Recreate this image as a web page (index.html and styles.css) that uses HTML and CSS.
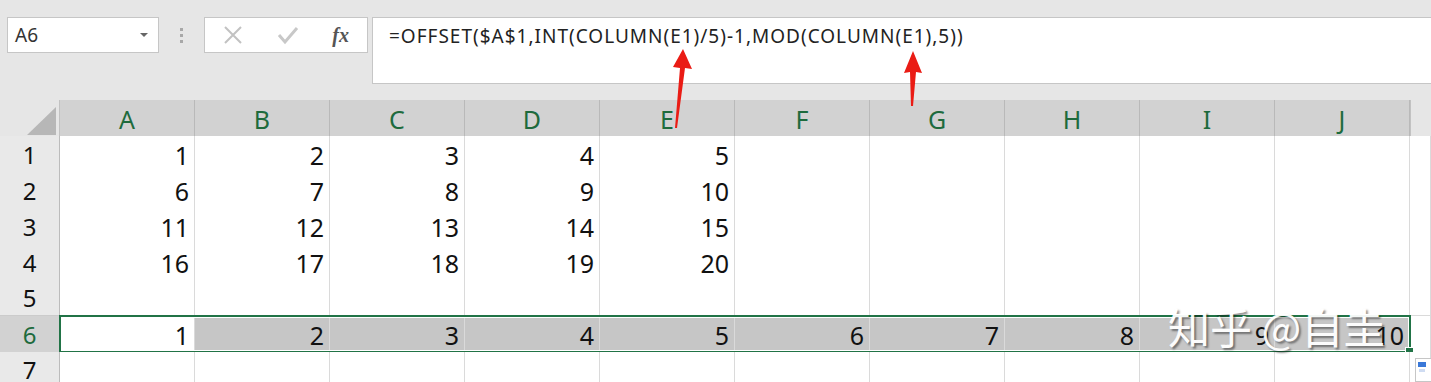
FILE: index.html
```html
<!DOCTYPE html>
<html lang="zh-CN">
<head>
  <meta charset="UTF-8">
  <title>OFFSET</title>
  <link rel="stylesheet" href="styles.css">
</head>
<body>
<div class="app">

  <!-- Namenfeld + Bearbeitungsleiste -->
  <div class="toolbar">
    <div class="namebox">
      <span>A6</span>
      <span class="caret"></span>
    </div>
    <div class="grip"><i></i><i></i><i></i></div>
    <div class="buttons">
      <svg width="20" height="20" viewBox="0 0 20 20"><path d="M2 2 L18 18 M18 2 L2 18" stroke="#c2c2c2" stroke-width="2" fill="none"/></svg>
      <svg width="22" height="20" viewBox="0 0 22 20"><path d="M2 10 L8 17 L20 3" stroke="#c8c8c8" stroke-width="3" fill="none"/></svg>
      <span class="fx">fx</span>
    </div>
    <div class="formula">=OFFSET($A$1,INT(COLUMN(E1)/5)-1,MOD(COLUMN(E1),5))</div>
  </div>

  <!-- Tabelle -->
  <div class="sheet">
    <div class="row head">
      <div class="corner"></div>
      <div class="col">A</div><div class="col">B</div><div class="col">C</div><div class="col">D</div><div class="col">E</div>
      <div class="col">F</div><div class="col">G</div><div class="col">H</div><div class="col">I</div><div class="col">J</div>
      <div class="rest"></div>
    </div>
    <div class="row">
      <div class="num">1</div>
      <div class="cell">1</div><div class="cell">2</div><div class="cell">3</div><div class="cell">4</div><div class="cell">5</div>
      <div class="cell"></div><div class="cell"></div><div class="cell"></div><div class="cell"></div><div class="cell"></div><div class="cell"></div>
    </div>
    <div class="row">
      <div class="num">2</div>
      <div class="cell">6</div><div class="cell">7</div><div class="cell">8</div><div class="cell">9</div><div class="cell">10</div>
      <div class="cell"></div><div class="cell"></div><div class="cell"></div><div class="cell"></div><div class="cell"></div><div class="cell"></div>
    </div>
    <div class="row">
      <div class="num">3</div>
      <div class="cell">11</div><div class="cell">12</div><div class="cell">13</div><div class="cell">14</div><div class="cell">15</div>
      <div class="cell"></div><div class="cell"></div><div class="cell"></div><div class="cell"></div><div class="cell"></div><div class="cell"></div>
    </div>
    <div class="row">
      <div class="num">4</div>
      <div class="cell">16</div><div class="cell">17</div><div class="cell">18</div><div class="cell">19</div><div class="cell">20</div>
      <div class="cell"></div><div class="cell"></div><div class="cell"></div><div class="cell"></div><div class="cell"></div><div class="cell"></div>
    </div>
    <div class="row">
      <div class="num">5</div>
      <div class="cell"></div><div class="cell"></div><div class="cell"></div><div class="cell"></div><div class="cell"></div>
      <div class="cell"></div><div class="cell"></div><div class="cell"></div><div class="cell"></div><div class="cell"></div><div class="cell"></div>
    </div>
    <div class="row selected">
      <div class="num">6</div>
      <div class="cell active">1</div><div class="cell">2</div><div class="cell">3</div><div class="cell">4</div><div class="cell">5</div>
      <div class="cell">6</div><div class="cell">7</div><div class="cell">8</div><div class="cell">9</div><div class="cell">10</div><div class="cell blank"></div>
      <div class="selection"><span class="handle"></span></div>
    </div>
    <div class="row">
      <div class="num">7</div>
      <div class="cell"></div><div class="cell"></div><div class="cell"></div><div class="cell"></div><div class="cell"></div>
      <div class="cell"></div><div class="cell"></div><div class="cell"></div><div class="cell"></div><div class="cell"></div><div class="cell"></div>
    </div>
  </div>

  <!-- Markierungen -->
  <svg class="arrows" width="1431" height="382" viewBox="0 0 1431 382">
    <polygon points="683,49 692,69 685,68 677,128 675,128 680,68 673,67" fill="#ea1c15"/>
    <polygon points="913,51 922,73 916,72 913,106 911,106 910,72 904,73" fill="#ea1c15"/>
  </svg>
  <div class="watermark">知乎 @自圭</div>
  <div class="quick"><span></span></div>

</div>
</body>
</html>
```

FILE: styles.css
```css
/* =====================
   Farben
   ===================== */
:root {
  --bg: #e6e6e6;
  --box-border: #c6c6c6;
  --green: #217346;
  --green-text: #1e6b3d;
  --grid: #dadada;
  --head-bg: #d2d2d2;
  --rowhead-bg: #e9e9e9;
  --sel-bg: #c6c6c6;
}

body {
  margin: 0;
  overflow: hidden;
  background: var(--bg);
  font-family: "Noto Sans", "Liberation Sans", "Noto Sans CJK SC", sans-serif;
  color: #111;
}

.app {
  position: relative;
  width: 1431px;
  height: 382px;
  overflow: hidden;
}

/* =====================
   Bearbeitungsleiste
   ===================== */
.toolbar {
  display: flex;
  align-items: flex-start;
  height: 100px;
  padding: 17px 0 0 7px;
  box-sizing: border-box;
}

.namebox {
  width: 152px;
  height: 36px;
  box-sizing: border-box;
  background: #fff;
  border: 1px solid var(--box-border);
  display: flex;
  align-items: center;
  justify-content: space-between;
  padding: 0 10px 0 7px;
  font-size: 19px;
  color: #333;
}

.caret {
  width: 0;
  height: 0;
  border-left: 4px solid transparent;
  border-right: 4px solid transparent;
  border-top: 4px solid #666;
}

.grip {
  width: 45px;
  height: 36px;
  display: flex;
  flex-direction: column;
  align-items: center;
  justify-content: center;
  gap: 3px;
}

.grip i {
  width: 3px;
  height: 3px;
  background: #a8a8a8;
}

.buttons {
  width: 164px;
  height: 36px;
  box-sizing: border-box;
  background: #fff;
  border: 1px solid var(--box-border);
  display: flex;
  align-items: center;
  justify-content: space-between;
  padding: 0 18px 0 18px;
}

.fx {
  font-family: "Liberation Serif", "DejaVu Serif", serif;
  font-style: italic;
  font-weight: bold;
  font-size: 20px;
  color: #555;
}

.formula {
  flex: 1;
  margin-left: 4px;
  height: 67px;
  box-sizing: border-box;
  background: #fff;
  border: 1px solid var(--box-border);
  border-right: none;
  padding: 5px 0 0 16px;
  font-size: 19px;
  letter-spacing: 1px;
  color: #222;
  white-space: nowrap;
}

/* =====================
   Tabelle
   ===================== */
.row {
  display: grid;
  grid-template-columns: 60px repeat(10, 135px) 1fr;
  height: 36px;
  background: #fff;
  position: relative;
}

.row > div {
  box-sizing: border-box;
}

.head {
  background: var(--bg);
}

.corner {
  border-right: 1px solid #c2c2c2;
  position: relative;
}

.corner::after {
  content: "";
  position: absolute;
  right: 3px;
  bottom: 3px;
  width: 0;
  height: 0;
  border-left: 29px solid transparent;
  border-bottom: 28px solid #b7b7b7;
}

.col {
  background: var(--head-bg);
  color: var(--green-text);
  border-right: 1px solid #b9b9b9;
  border-bottom: 2px solid var(--green);
  display: flex;
  align-items: center;
  justify-content: center;
  font-size: 25px;
  padding-top: 2px;
}

.rest {
  border-left: 1px solid #c2c2c2;
  border-bottom: 1px solid #c2c2c2;
}

.num {
  background: var(--rowhead-bg);
  border-right: 1px solid #bcbcbc;
  border-bottom: 1px solid #cbcbcb;
  display: flex;
  align-items: center;
  justify-content: center;
  font-size: 24px;
  color: #111;
}

.cell {
  border-right: 1px solid var(--grid);
  border-bottom: 1px solid var(--grid);
  display: flex;
  align-items: center;
  justify-content: flex-end;
  padding: 2px 5px 0 0;
  font-size: 25px;
  color: #111;
}

.selected .num {
  background: var(--head-bg);
  color: var(--green-text);
}

.selected .cell {
  background: var(--sel-bg);
}

.selected .cell.active,
.selected .cell.blank {
  background: #fff;
}

/* Auswahlrahmen über Zeile 6 */
.selection {
  position: absolute;
  left: 59px;
  top: -1px;
  width: 1352px;
  height: 38px;
  box-sizing: border-box;
  border: 2px solid var(--green);
  box-shadow: inset 0 0 0 1px #fff;
  pointer-events: none;
}

.handle {
  position: absolute;
  right: -5px;
  bottom: -5px;
  width: 7px;
  height: 7px;
  background: var(--green);
  border: 1px solid #fff;
}

/* =====================
   Überlagerungen
   ===================== */
.arrows {
  position: absolute;
  left: 0;
  top: 0;
  pointer-events: none;
}

.watermark {
  position: absolute;
  left: 1168px;
  top: 295px;
  font-family: "Noto Sans CJK SC", sans-serif;
  font-size: 42px;
  color: #fff;
  text-shadow: 2px 2px 2px rgba(0,0,0,0.45);
  white-space: nowrap;
  opacity: 0.95;
}

.quick {
  position: absolute;
  left: 1415px;
  top: 358px;
  width: 22px;
  height: 22px;
  background: #fff;
  border: 1px solid #c6c6c6;
}

.quick span {
  position: absolute;
  left: 2px;
  top: 3px;
  width: 8px;
  height: 5px;
  background: #3a78d8;
  box-shadow: 0 6px 0 -1px #cfdcf2;
}
```
